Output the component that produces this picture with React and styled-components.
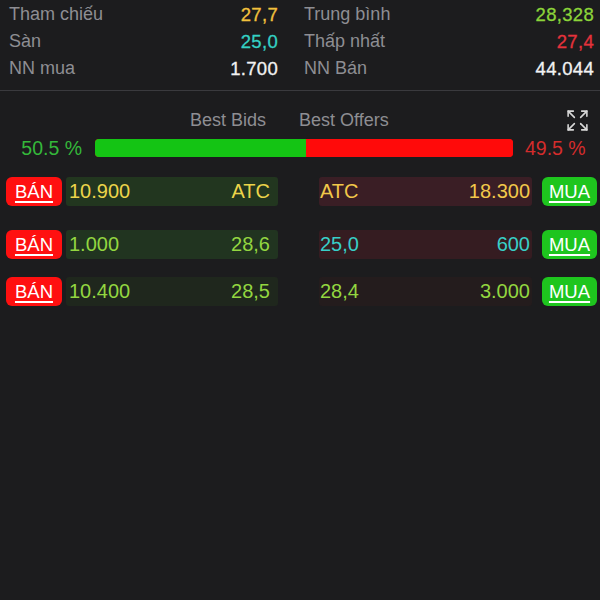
import React from "react";
import styled, { createGlobalStyle } from "styled-components";
import { Expand } from "lucide-react";

const Global = createGlobalStyle`
  html, body { margin: 0; padding: 0; background: #1c1c1e; }
  body { font-family: "Liberation Sans", Arial, sans-serif; }
  #root { min-height: 600px; background: #1c1c1e; }
`;

const Page = styled.div`
  width: 600px;
  height: 600px;
  background: #1c1c1e;
  overflow: hidden;
`;

const Stats = styled.div`
  display: grid;
  grid-template-columns: 269px 290px;
  column-gap: 26px;
  padding: 1px 0 0 9px;
  grid-auto-rows: 27px;
`;

const StatRow = styled.div`
  display: flex;
  align-items: center;
  justify-content: space-between;
  font-size: 18px;
`;

const Label = styled.span`
  color: #8e8e93;
`;

const Value = styled.span`
  color: ${(p) => p.$color};
  font-size: 18.5px;
  letter-spacing: 0.3px;
  -webkit-text-stroke: 0.3px ${(p) => p.$color};
`;

const Divider = styled.div`
  height: 1px;
  background: #3a3a3e;
  margin-top: 8px;
`;

const Header = styled.div`
  display: grid;
  grid-template-columns: 266px auto 1fr auto;
  align-items: center;
  height: 36px;
  margin-top: 11px;
  padding-right: 10px;
  font-size: 18px;
  color: #8e8e93;
`;

const HeadLeft = styled.span`
  text-align: right;
`;

const HeadRight = styled.span`
  margin-left: 33px;
`;

const IconWrap = styled.span`
  display: flex;
  color: #d8d8d8;
`;

const BarRow = styled.div`
  display: flex;
  align-items: center;
  margin-top: 1px;
  height: 18px;
`;

const Pct = styled.span`
  font-size: 19.5px;
  color: ${(p) => p.$color};
  width: ${(p) => (p.$left ? "82px" : "auto")};
  text-align: ${(p) => (p.$left ? "right" : "left")};
  margin: ${(p) => (p.$left ? "0 13px 0 0" : "0 0 0 12px")};
`;

const Bar = styled.div`
  display: flex;
  width: 418px;
  height: 18px;
  border-radius: 4px;
  overflow: hidden;
  background: #ff0a0a;
`;

const BarFill = styled.div`
  height: 100%;
  background: ${(p) => p.$color};
`;

const Orders = styled.div`
  display: flex;
  flex-direction: column;
  padding-left: 6px;
  margin-top: 20px;
`;

const OrderRow = styled.div`
  display: flex;
  align-items: center;
  height: 29px;
  margin-top: ${(p) => p.$mt}px;
`;

const ActionBtn = styled.button`
  width: ${(p) => p.$w}px;
  height: 29px;
  margin-left: ${(p) => p.$ml || 0}px;
  border: none;
  border-radius: 6px;
  background: ${(p) => p.$bg};
  color: #ffffff;
  font-family: "Liberation Sans", Arial, sans-serif;
  font-size: 18.5px;
  text-decoration: underline;
  text-underline-offset: 3px;
  text-decoration-thickness: 1.5px;
  padding: 0;
  display: flex;
  align-items: center;
  justify-content: center;
`;

const Cell = styled.div`
  display: flex;
  align-items: center;
  justify-content: space-between;
  width: ${(p) => p.$w}px;
  height: 29px;
  margin-left: ${(p) => p.$ml}px;
  padding: ${(p) => p.$pad};
  box-sizing: border-box;
  background: ${(p) => p.$bg};
  border-radius: 3px;
  font-size: 20px;
  color: ${(p) => p.$color};
`;

const C = {
  yellow: "#f2c13d",
  teal: "#34d1c4",
  green: "#8cd43a",
  red: "#e4323c",
  white: "#f2f2f2",
  ordYellow: "#ecd44a",
  ordGreen: "#93d640",
  ordTeal: "#38cfc8",
  ordOfferYellow: "#f2c84a",
};

const stats = [
  ["Tham chiếu", "27,7", C.yellow, "Trung bình", "28,328", C.green],
  ["Sàn", "25,0", C.teal, "Thấp nhất", "27,4", C.red],
  ["NN mua", "1.700", C.white, "NN Bán", "44.044", C.white],
];

const orders = [
  { mt: 0, bq: "10.900", bp: "ATC", bc: C.ordYellow, bbg: "#22361f", op: "ATC", oq: "18.300", oc: C.ordOfferYellow, obg: "#3a1e25" },
  { mt: 24, bq: "1.000", bp: "28,6", bc: C.ordGreen, bbg: "#213420", op: "25,0", oq: "600", oc: C.ordTeal, obg: "#351c21" },
  { mt: 18, bq: "10.400", bp: "28,5", bc: C.ordGreen, bbg: "#1f271d", op: "28,4", oq: "3.000", oc: C.ordGreen, obg: "#241c1d" },
];

export default function App() {
  const bidPct = 50.5;
  return (
    <Page>
      <Global />
      <Stats>
        {stats.map((r) => (
          <React.Fragment key={r[0]}>
            <StatRow>
              <Label>{r[0]}</Label>
              <Value $color={r[2]}>{r[1]}</Value>
            </StatRow>
            <StatRow>
              <Label>{r[3]}</Label>
              <Value $color={r[5]}>{r[4]}</Value>
            </StatRow>
          </React.Fragment>
        ))}
      </Stats>
      <Divider />
      <Header>
        <HeadLeft>Best Bids</HeadLeft>
        <HeadRight>Best Offers</HeadRight>
        <span />
        <IconWrap>
          <Expand size={25} strokeWidth={1.5} />
        </IconWrap>
      </Header>
      <BarRow>
        <Pct $left $color="#34b83a">50.5 %</Pct>
        <Bar>
          <BarFill $color="#14c414" style={{ width: `${bidPct}%` }} />
          <BarFill $color="#ff0a0a" style={{ flex: 1 }} />
        </Bar>
        <Pct $color="#d42c2c">49.5 %</Pct>
      </BarRow>
      <Orders>
        {orders.map((o, i) => (
          <OrderRow key={i} $mt={o.mt}>
            <ActionBtn $w={56} $bg="#ff1010">BÁN</ActionBtn>
            <Cell $w={212} $ml={4} $pad="0 8px 0 3px" $bg={o.bbg} $color={o.bc}>
              <span>{o.bq}</span>
              <span>{o.bp}</span>
            </Cell>
            <Cell $w={213} $ml={41} $pad="0 2px 0 1px" $bg={o.obg} $color={o.oc}>
              <span>{o.op}</span>
              <span>{o.oq}</span>
            </Cell>
            <ActionBtn $w={55} $ml={10} $bg="#1ec51e">MUA</ActionBtn>
          </OrderRow>
        ))}
      </Orders>
    </Page>
  );
}
